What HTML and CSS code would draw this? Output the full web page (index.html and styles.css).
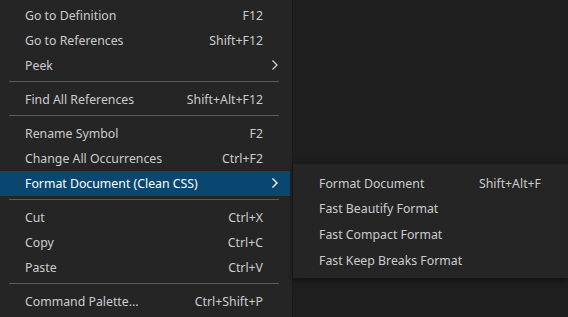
FILE: index.html
```html
<!DOCTYPE html>
<html>
<head>
<meta charset="utf-8">
<link rel="stylesheet" href="styles.css">
</head>
<body>
<div class="screen">
  <div class="menu">
    <div class="item"><span class="label">Go to Definition</span><span class="key">F12</span></div>
    <div class="item"><span class="label">Go to References</span><span class="key">Shift+F12</span></div>
    <div class="item"><span class="label">Peek</span><span class="key"></span><svg class="chev" viewBox="0 0 8 12" width="8" height="12"><polyline points="1.5,1.5 6,6 1.5,10.5" fill="none" stroke="#cccccc" stroke-width="1.4"/></svg></div>
    <div class="sep"></div>
    <div class="item"><span class="label">Find All References</span><span class="key">Shift+Alt+F12</span></div>
    <div class="sep"></div>
    <div class="item"><span class="label">Rename Symbol</span><span class="key">F2</span></div>
    <div class="item"><span class="label">Change All Occurrences</span><span class="key">Ctrl+F2</span></div>
    <div class="item active"><span class="label">Format Document (Clean CSS)</span><span class="key"></span><svg class="chev" viewBox="0 0 8 12" width="8" height="12"><polyline points="1.5,1.5 6,6 1.5,10.5" fill="none" stroke="#ffffff" stroke-width="1.4"/></svg></div>
    <div class="sep"></div>
    <div class="item"><span class="label">Cut</span><span class="key">Ctrl+X</span></div>
    <div class="item"><span class="label">Copy</span><span class="key">Ctrl+C</span></div>
    <div class="item"><span class="label">Paste</span><span class="key">Ctrl+V</span></div>
    <div class="sep"></div>
    <div class="item"><span class="label">Command Palette...</span><span class="key">Ctrl+Shift+P</span></div>
  </div>
  <div class="editor">
    <div class="submenu">
      <div class="item"><span class="label">Format Document</span><span class="key">Shift+Alt+F</span></div>
      <div class="item"><span class="label">Fast Beautify Format</span><span class="key"></span></div>
      <div class="item"><span class="label">Fast Compact Format</span><span class="key"></span></div>
      <div class="item"><span class="label">Fast Keep Breaks Format</span><span class="key"></span></div>
    </div>
  </div>
</div>
</body>
</html>
```
FILE: styles.css
```css
html, body {
  margin: 0;
  padding: 0;
  background: #1e1e1e;
}
.screen {
  width: 568px;
  height: 317px;
  display: flex;
  overflow: hidden;
  font-family: "Segoe UI", "Noto Sans", sans-serif;
  font-size: 12.3px;
  color: #cccccc;
}
.menu {
  width: 290px;
  padding: 2.5px 2px 0 0;
  background: #252526;
  flex: none;
}
.item {
  height: 25px;
  display: flex;
  align-items: center;
  padding-left: 25px;
  padding-right: 27px;
  position: relative;
}
.item .label {
  flex: 1;
  white-space: nowrap;
}
.item .key {
  white-space: nowrap;
}
.item.active {
  background: #094771;
  color: #ffffff;
}
.chev {
  position: absolute;
  right: 11px;
  top: 6.5px;
}
.sep {
  height: 9px;
  padding: 3px 11px 0 9px;
  box-sizing: border-box;
}
.sep::before {
  content: "";
  display: block;
  height: 1px;
  background: #5a5a5a;
}
.editor {
  flex: 1;
  background: #1e1e1e;
  border-left: 1px solid #1a1a1a;
  padding-top: 164px;
}
.submenu {
  background: #252526;
  padding: 6.5px 0 5px;
  box-shadow: 0 2px 6px rgba(0, 0, 0, 0.5);
}
.submenu .item {
  height: 25.6px;
  padding-left: 26px;
  padding-right: 27px;
}
```
